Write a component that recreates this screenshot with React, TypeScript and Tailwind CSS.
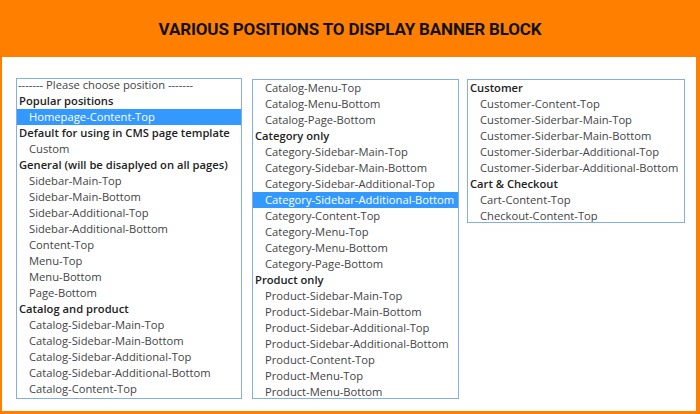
import React from 'react'

type Row = { label: string; group?: boolean; selected?: boolean; plain?: boolean }

const col1: Row[] = [
    { label: '------- Please choose position -------', plain: true },
    { label: 'Popular positions', group: true },
    { label: 'Homepage-Content-Top', selected: true },
    { label: 'Default for using in CMS page template', group: true },
    { label: 'Custom' },
    { label: 'General (will be disaplyed on all pages)', group: true },
    { label: 'Sidebar-Main-Top' },
    { label: 'Sidebar-Main-Bottom' },
    { label: 'Sidebar-Additional-Top' },
    { label: 'Sidebar-Additional-Bottom' },
    { label: 'Content-Top' },
    { label: 'Menu-Top' },
    { label: 'Menu-Bottom' },
    { label: 'Page-Bottom' },
    { label: 'Catalog and product', group: true },
    { label: 'Catalog-Sidebar-Main-Top' },
    { label: 'Catalog-Sidebar-Main-Bottom' },
    { label: 'Catalog-Sidebar-Additional-Top' },
    { label: 'Catalog-Sidebar-Additional-Bottom' },
    { label: 'Catalog-Content-Top' },
]

const col2: Row[] = [
    { label: 'Catalog-Menu-Top' },
    { label: 'Catalog-Menu-Bottom' },
    { label: 'Catalog-Page-Bottom' },
    { label: 'Category only', group: true },
    { label: 'Category-Sidebar-Main-Top' },
    { label: 'Category-Sidebar-Main-Bottom' },
    { label: 'Category-Sidebar-Additional-Top' },
    { label: 'Category-Sidebar-Additional-Bottom', selected: true },
    { label: 'Category-Content-Top' },
    { label: 'Category-Menu-Top' },
    { label: 'Category-Menu-Bottom' },
    { label: 'Category-Page-Bottom' },
    { label: 'Product only', group: true },
    { label: 'Product-Sidebar-Main-Top' },
    { label: 'Product-Sidebar-Main-Bottom' },
    { label: 'Product-Sidebar-Additional-Top' },
    { label: 'Product-Sidebar-Additional-Bottom' },
    { label: 'Product-Content-Top' },
    { label: 'Product-Menu-Top' },
    { label: 'Product-Menu-Bottom' },
]

const col3: Row[] = [
    { label: 'Customer', group: true },
    { label: 'Customer-Content-Top' },
    { label: 'Customer-Siderbar-Main-Top' },
    { label: 'Customer-Siderbar-Main-Bottom' },
    { label: 'Customer-Siderbar-Additional-Top' },
    { label: 'Customer-Siderbar-Additional-Bottom' },
    { label: 'Cart & Checkout', group: true },
    { label: 'Cart-Content-Top' },
    { label: 'Checkout-Content-Top' },
]

const Option = ({ row }: { row: Row }) => {
    if (row.group) {
        return <div className="h-4 leading-4 pl-[2px] font-semibold text-[#222]">{row.label}</div>
    }
    if (row.plain) {
        return <div className="h-4 leading-4 pl-[1px] text-[#444]">{row.label}</div>
    }
    return (
      <div
        className={
          row.selected
            ? 'h-4 leading-4 pl-[12px] bg-[#3399ff] text-white'
            : 'h-4 leading-4 pl-[12px] text-[#444]'
        }
      >
          {row.label}
      </div>
    )
}

const App = () => {
    return (
      <div className="w-[700px] h-[414px] bg-[#ff8000] overflow-hidden" style={{ fontFamily: '"Open Sans", sans-serif' }}>
          <header className="h-[57px] pt-[2px] flex items-center justify-center">
              <h1 className="text-[17px] font-bold text-[#111] tracking-[-0.15px] uppercase" style={{ fontFamily: 'Roboto, sans-serif' }}>
                  Various positions to display banner block
              </h1>
          </header>
          <div className="ml-[2px] mr-[4px] h-[354px] bg-white flex items-start text-[11.2px] whitespace-nowrap">
              <div className="ml-[14px] mt-[21px] w-[226px] h-[321px] border border-[#86aee6] overflow-hidden">
                  <div className="-mt-[2px]">
                      {col1.map((r) => <Option key={r.label} row={r} />)}
                  </div>
              </div>
              <div className="ml-[10px] mt-[22px] w-[207px] h-[320px] border border-[#86aee6] overflow-hidden">
                  {col2.map((r) => <Option key={r.label} row={r} />)}
              </div>
              <div className="ml-[8px] mt-[22px] w-[218px] h-[144px] border border-[#86aee6] overflow-hidden">
                  {col3.map((r) => <Option key={r.label} row={r} />)}
              </div>
          </div>
      </div>
    )
}

export default App
